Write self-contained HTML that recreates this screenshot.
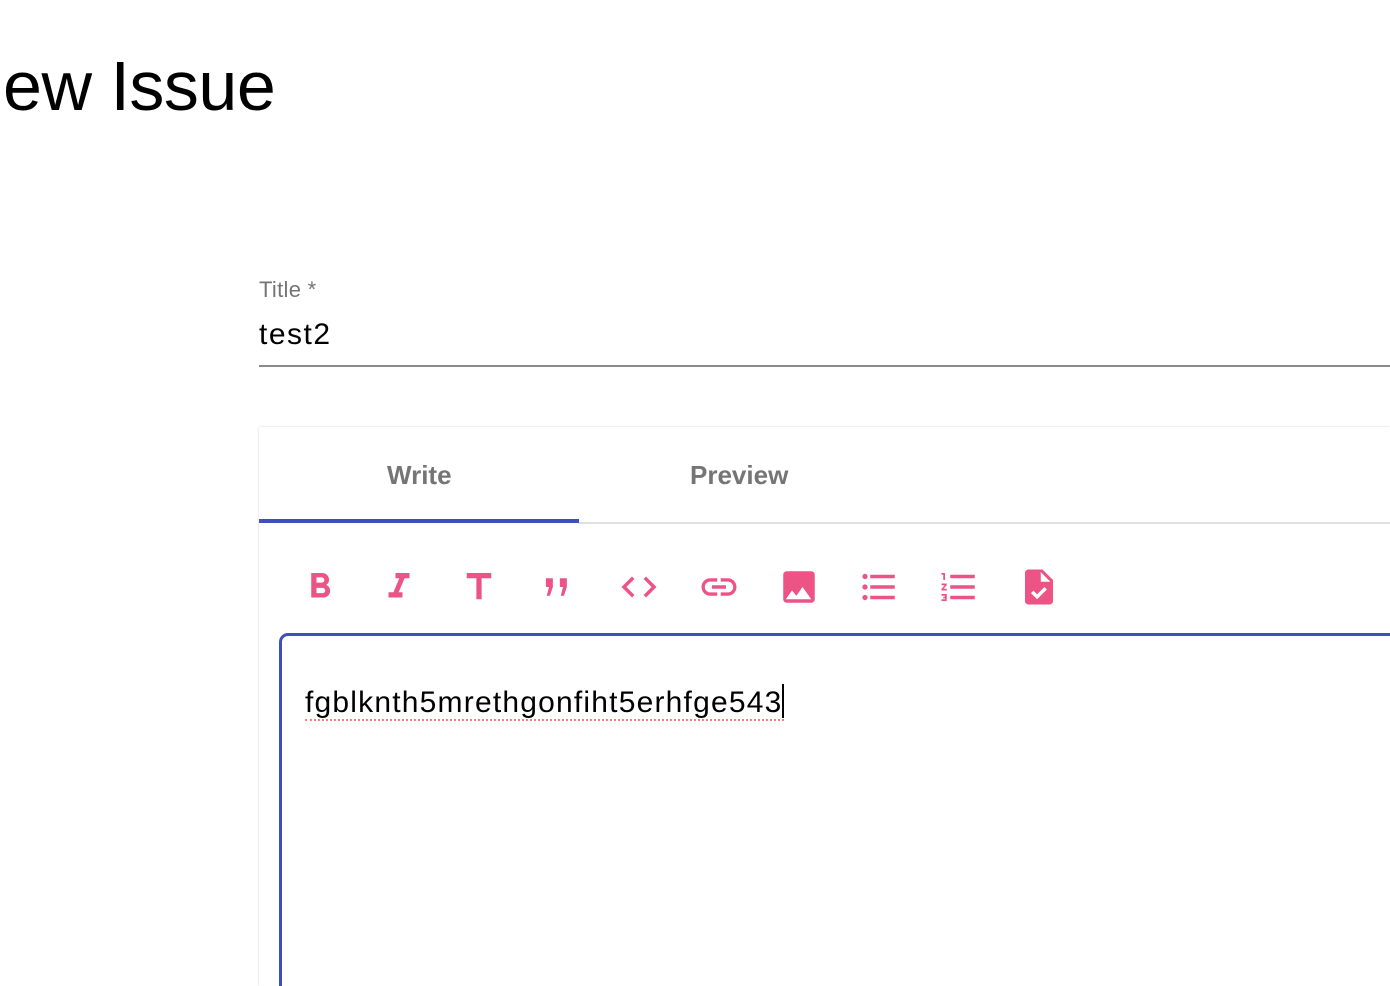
<!DOCTYPE html>
<html><head><meta charset="utf-8"><style>
html,body{margin:0;padding:0;width:1390px;height:986px;overflow:hidden;background:#fff;font-family:"Liberation Sans",Arial,sans-serif;position:relative;}
.h{position:absolute;left:-47px;top:46px;font-size:70px;color:#000;white-space:nowrap;letter-spacing:-0.5px;}
.lbl{position:absolute;left:259px;top:277px;font-size:22px;color:#757575;letter-spacing:0.3px;}
.val{position:absolute;left:259px;top:318px;font-size:30px;color:#000;letter-spacing:1.5px;}
.ul{position:absolute;left:259px;top:365px;width:1131px;height:2px;background:#8a8a8a;}
.card{position:absolute;left:259px;top:427px;width:1131px;height:559px;background:#fff;box-shadow:0 0 2px rgba(0,0,0,.18);overflow:hidden;}
.tab{position:absolute;top:33px;font-size:26px;font-weight:bold;color:#757575;}
.ind{position:absolute;left:0;top:92px;width:320px;height:4px;background:#3f51b5;}
.div{position:absolute;left:320px;top:95px;width:900px;height:2px;background:#e0e0e0;}
.ic{position:absolute;top:139px;width:42px;height:42px;}
.ta{position:absolute;left:20px;top:206px;width:1200px;height:500px;border:3px solid #3f51b5;border-radius:9px;}
.txt{position:absolute;left:23px;top:48px;font-size:30px;color:#000;border-bottom:2px dotted #f08080;line-height:32px;letter-spacing:1.2px;}
.cur{display:inline-block;width:2px;height:34px;background:#000;vertical-align:-6px;margin-left:-1px;}
</style></head><body>
<div class="h">New Issue</div>
<div class="lbl">Title *</div>
<div class="val">test2</div>
<div class="ul"></div>
<div class="card">
<div class="tab" style="left:128px">Write</div>
<div class="tab" style="left:431px">Preview</div>
<div class="ind"></div><div class="div"></div>
<svg class="ic" style="left:40px" viewBox="0 0 24 24" fill="#ec5486"><path d="M15.6 10.8c1-.7 1.6-1.8 1.6-2.8 0-2.3-1.7-4-4-4H7v14h7c2.1 0 3.8-1.7 3.8-3.8 0-1.5-.9-2.8-2.2-3.4zM10 6.5h3c.8 0 1.5.7 1.5 1.5s-.7 1.5-1.5 1.5h-3v-3zm3.5 9H10v-3h3.5c.8 0 1.5.7 1.5 1.5s-.7 1.5-1.5 1.5z"/></svg>
<svg class="ic" style="left:119px" viewBox="0 0 24 24" fill="#ec5486"><path d="M10 4v3h2.2l-3.4 8H6v3h8v-3h-2.2l3.4-8H18V4z"/></svg>
<svg class="ic" style="left:199px" viewBox="0 0 24 24" fill="#ec5486"><path d="M5 4v3h5.5v12h3V7H19V4z"/></svg>
<svg class="ic" style="left:279px" viewBox="0 0 24 24" fill="#ec5486"><path d="M4.5 7h4v5l-1.7 5H5l1.3-5H4.5zM12.5 7h4v5l-1.7 5H13l1.3-5h-1.8z"/></svg>
<svg class="ic" style="left:359px" viewBox="0 0 24 24" fill="#ec5486"><path d="M9.4 16.6L4.8 12l4.6-4.6L8 6l-6 6 6 6 1.4-1.4zm5.2 0l4.6-4.6-4.6-4.6L16 6l6 6-6 6-1.4-1.4z"/></svg>
<svg class="ic" style="left:439px" viewBox="0 0 24 24" fill="#ec5486"><path d="M3.9 12c0-1.7 1.4-3.1 3.1-3.1h4V7H7c-2.8 0-5 2.2-5 5s2.2 5 5 5h4v-1.9H7c-1.7 0-3.1-1.4-3.1-3.1zM8 13h8v-2H8v2zm9-6h-4v1.9h4c1.7 0 3.1 1.4 3.1 3.1s-1.4 3.1-3.1 3.1h-4V17h4c2.8 0 5-2.200 5-5s-2.2-5-5-5z"/></svg>
<svg class="ic" style="left:519px" viewBox="0 0 24 24" fill="#ec5486"><path d="M21 19V5c0-1.1-.9-2-2-2H5c-1.1 0-2 .9-2 2v14c0 1.1.9 2 2 2h14c1.1 0 2-.9 2-2zM4.5 19l3.5-5 2.5 3 3.5-5 5 7z"/></svg>
<svg class="ic" style="left:599px" viewBox="0 0 24 24" fill="#ec5486"><path d="M4 10.5c-.8 0-1.5.7-1.5 1.5s.7 1.5 1.5 1.5 1.5-.7 1.5-1.5-.7-1.5-1.5-1.5zm0-6c-.8 0-1.5.7-1.5 1.5S3.2 7.5 4 7.5 5.5 6.8 5.5 6 4.8 4.5 4 4.5zm0 12c-.8 0-1.5.7-1.5 1.5s.7 1.5 1.5 1.5 1.5-.7 1.5-1.5-.7-1.5-1.5-1.5zM7 19h14v-2H7v2zm0-6h14v-2H7v2zm0-8v2h14V5H7z"/></svg>
<svg class="ic" style="left:679px" viewBox="0 0 24 24" fill="#ec5486"><path d="M2 17h2v.5H3v1h1v.5H2v1h3v-4H2v1zm1-9h1V4H2v1h1v3zm-1 3h1.8L2 13.1v.9h3v-1H3.2L5 10.9V10H2v1zm5-6v2h14V5H7zm0 14h14v-2H7v2zm0-6h14v-2H7v2z"/></svg>
<svg class="ic" style="left:759px" viewBox="0 0 24 24" fill="#ec5486"><path d="M14 2H6c-1.1 0-2 .9-2 2v16c0 1.1.9 2 2 2h12c1.1 0 2-.9 2-2V8l-6-6zm-3.1 17L7.4 15.5l1.4-1.4 2.1 2.1 4.2-4.2 1.4 1.4L10.9 19zM13 9V3.5L18.5 9H13z"/></svg>
<div class="ta"><div class="txt">fgblknth5mrethgonfiht5erhfge543<span class="cur"></span></div></div>
</div>
</body></html>
